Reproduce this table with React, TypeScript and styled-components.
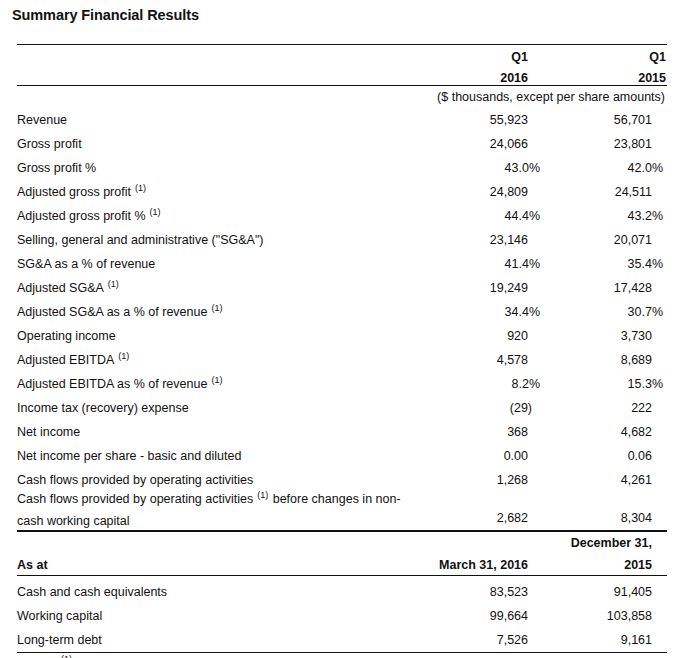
import React from "react";
import styled, { createGlobalStyle } from "styled-components";

const GlobalStyle = createGlobalStyle`
  html, body { margin: 0; padding: 0; background: #ffffff; }
  body {
    font-family: "Liberation Sans", Arial, Helvetica, sans-serif;
    color: #111111;
    -webkit-font-smoothing: antialiased;
  }
`;

type Kind = "n" | "p" | "paren";

const PAD1: Record<Kind, number> = { n: 12, p: 0, paren: 8 };
const PAD2: Record<Kind, number> = { n: 15, p: 4, paren: 15 };

const Page = styled.div`
  width: 698px;
  padding-top: 6px;
`;

const Title = styled.h2`
  margin: 0 0 20px 12px;
  font-size: 14.5px;
  line-height: 18px;
  font-weight: 700;
  letter-spacing: -0.1px;
`;

const Table = styled.div`
  margin-left: 17px;
  width: 650px;
  font-size: 12.5px;
`;

const Grid = styled.div<{ $h: number; $lh?: number }>`
  display: grid;
  grid-template-columns: 400px 123px 127px;
  height: ${(p) => p.$h}px;
  line-height: ${(p) => p.$lh ?? p.$h}px;
`;

const HeadBlock = styled(Grid)`
  box-sizing: border-box;
  border-top: 1px solid #111;
  border-bottom: 1px solid #111;
  padding-top: 2px;
  font-weight: 700;
`;

const HeadBlock2 = styled(Grid)`
  box-sizing: border-box;
  border-top: 1px solid #111;
  border-bottom: 1px solid #111;
  font-weight: 700;
  align-items: end;
`;

const Label = styled.div`
  white-space: nowrap;
`;

const Cell = styled.div<{ $pad: number }>`
  text-align: right;
  padding-right: ${(p) => p.$pad}px;
  white-space: nowrap;
`;

const BottomCell = styled(Cell)`
  align-self: end;
  line-height: 24px;
  padding-bottom: 2px;
`;

const UnitsRow = styled.div`
  height: 21px;
  line-height: 20px;
  padding-top: 1px;
  text-align: right;
  padding-right: 2px;
`;

const Sup = styled.sup`
  font-size: 9px;
  line-height: 0;
  vertical-align: 5px;
  margin-left: 4px;
  margin-right: 1px;
`;

const TwoLine = styled(Grid)`
  box-sizing: border-box;
  border-bottom: 1px solid #111;
  margin-top: -4px;
`;

const Section = styled.div`
  padding-top: 4px;
  border-bottom: 1px solid #111;
`;

const Footnote = styled.div`
  padding-left: 40px;
  padding-top: 2px;
  font-size: 12.5px;
  line-height: 16px;
`;

const rows: { label: string; sup?: boolean; a: string; b: string; k: Kind }[] = [
  { label: "Revenue", a: "55,923", b: "56,701", k: "n" },
  { label: "Gross profit", a: "24,066", b: "23,801", k: "n" },
  { label: "Gross profit %", a: "43.0%", b: "42.0%", k: "p" },
  { label: "Adjusted gross profit", sup: true, a: "24,809", b: "24,511", k: "n" },
  { label: "Adjusted gross profit %", sup: true, a: "44.4%", b: "43.2%", k: "p" },
  { label: 'Selling, general and administrative ("SG&A")', a: "23,146", b: "20,071", k: "n" },
  { label: "SG&A as a % of revenue", a: "41.4%", b: "35.4%", k: "p" },
  { label: "Adjusted SG&A", sup: true, a: "19,249", b: "17,428", k: "n" },
  { label: "Adjusted SG&A as a % of revenue", sup: true, a: "34.4%", b: "30.7%", k: "p" },
  { label: "Operating income", a: "920", b: "3,730", k: "n" },
  { label: "Adjusted EBITDA", sup: true, a: "4,578", b: "8,689", k: "n" },
  { label: "Adjusted EBITDA as % of revenue", sup: true, a: "8.2%", b: "15.3%", k: "p" },
  { label: "Income tax (recovery) expense", a: "(29)", b: "222", k: "paren" },
  { label: "Net income", a: "368", b: "4,682", k: "n" },
  { label: "Net income per share - basic and diluted", a: "0.00", b: "0.06", k: "n" },
  { label: "Cash flows provided by operating activities", a: "1,268", b: "4,261", k: "n" },
];

const balance = [
  { label: "Cash and cash equivalents", a: "83,523", b: "91,405" },
  { label: "Working capital", a: "99,664", b: "103,858" },
  { label: "Long-term debt", a: "7,526", b: "9,161" },
];

export default function App() {
  return (
    <>
      <GlobalStyle />
      <Page>
        <Title>Summary Financial Results</Title>
        <Table>
          <HeadBlock $h={42} $lh={21}>
            <Label />
            <Cell $pad={12}>
              Q1
              <br />
              2016
            </Cell>
            <Cell $pad={1}>
              Q1
              <br />
              2015
            </Cell>
          </HeadBlock>
          <UnitsRow>($ thousands, except per share amounts)</UnitsRow>
          {rows.map((r) => (
            <Grid key={r.label} $h={24}>
              <Label>
                {r.label}
                {r.sup && <Sup>(1)</Sup>}
              </Label>
              <Cell $pad={PAD1[r.k]}>{r.a}</Cell>
              <Cell $pad={PAD2[r.k]}>{r.b}</Cell>
            </Grid>
          ))}
          <TwoLine $h={43} $lh={22}>
            <Label>
              Cash flows provided by operating activities<Sup>(1)</Sup> before changes in non-
              <br />
              cash working capital
            </Label>
            <BottomCell $pad={12}>2,682</BottomCell>
            <BottomCell $pad={15}>8,304</BottomCell>
          </TwoLine>
          <HeadBlock2 $h={45} $lh={22}>
            <Label>As at</Label>
            <Cell $pad={12}>March 31, 2016</Cell>
            <Cell $pad={15}>
              December 31,
              <br />
              2015
            </Cell>
          </HeadBlock2>
          <Section>
            {balance.map((r) => (
              <Grid key={r.label} $h={24}>
                <Label>{r.label}</Label>
                <Cell $pad={12}>{r.a}</Cell>
                <Cell $pad={15}>{r.b}</Cell>
              </Grid>
            ))}
          </Section>
          <Footnote>
            <Sup>(1)</Sup>
          </Footnote>
        </Table>
      </Page>
    </>
  );
}
